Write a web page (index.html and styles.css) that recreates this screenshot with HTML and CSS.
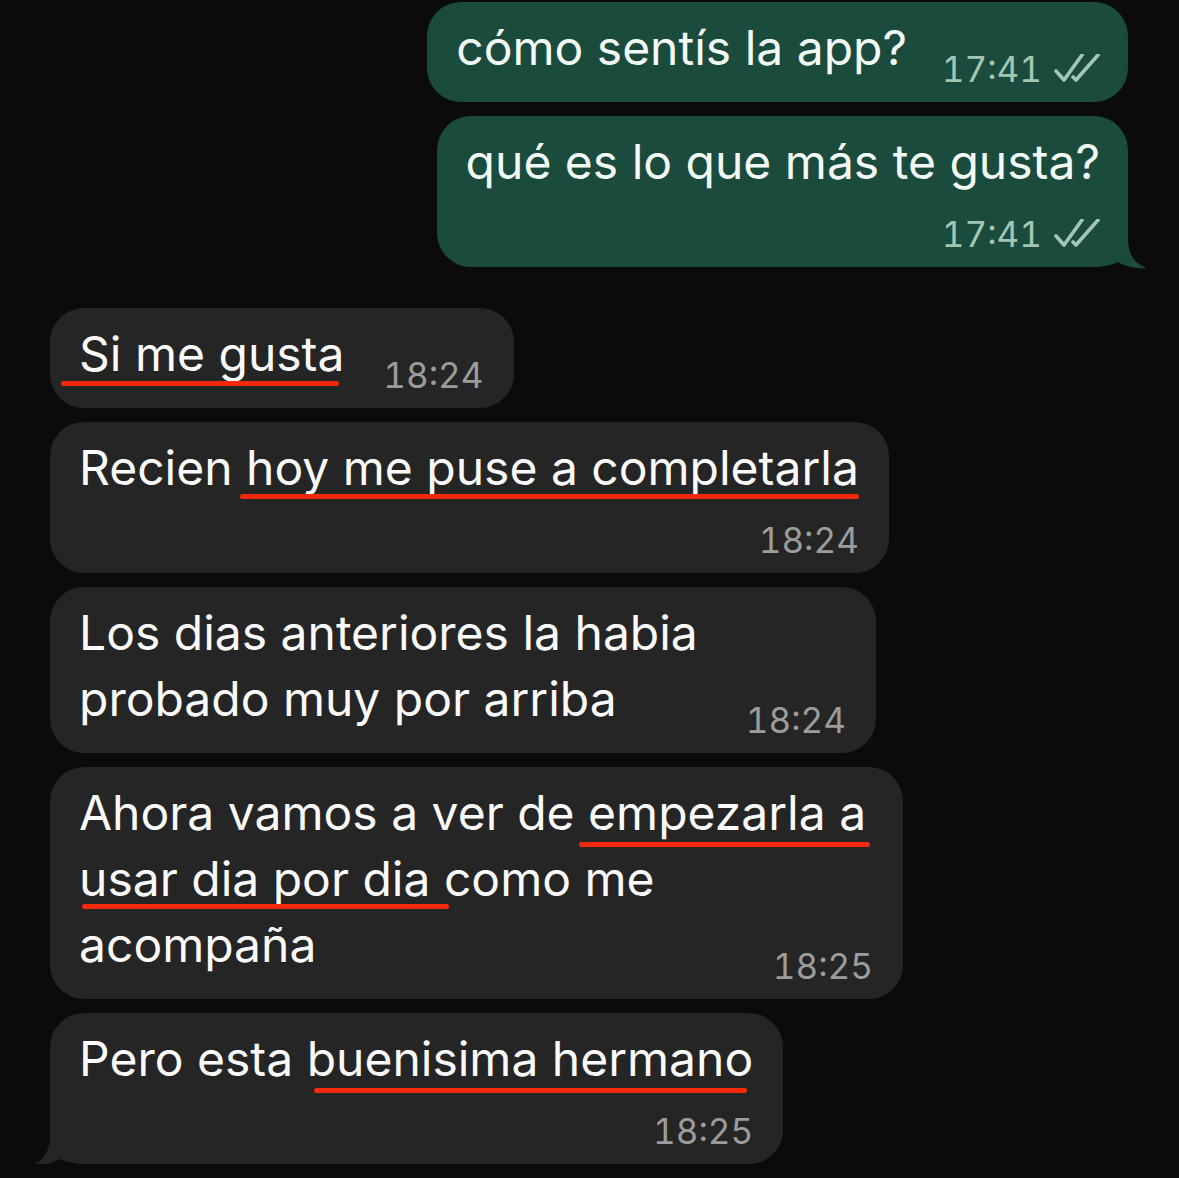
FILE: index.html
```html
<!DOCTYPE html>
<html lang="es">
<head>
<meta charset="utf-8">
<title>Chat</title>
<link rel="stylesheet" href="styles.css">
</head>
<body>
<main class="chat">
  <div class="bubble out">
    <p class="text">cómo sentís la app?<span class="spacer sp-out"></span></p>
    <span class="meta"><span class="time">17:41</span><svg class="ticks" viewBox="0 0 46 28" width="46" height="28"><path d="M2 17 L10 26 L28 1"/><path d="M19 23 L22 26 L44 1"/></svg></span>
  </div>
  <div class="bubble out tailed">
    <svg class="tail tail-out" viewBox="0 0 60 46" width="60" height="46"><path d="M0 0 H40 V14 C40 30 46 40 59 44 C50 45 38 43 30 38 C25 41 15 43 0 43 Z"/></svg>
    <p class="text">qué es lo que más te gusta?<span class="spacer row"></span></p>
    <span class="meta"><span class="time">17:41</span><svg class="ticks" viewBox="0 0 46 28" width="46" height="28"><path d="M2 17 L10 26 L28 1"/><path d="M19 23 L22 26 L44 1"/></svg></span>
  </div>

  <div class="bubble in first">
    <p class="text"><span class="ul u1">Si me gusta</span><span class="spacer sp-in"></span></p>
    <span class="meta"><span class="time">18:24</span></span>
  </div>
  <div class="bubble in">
    <p class="text">Recien <span class="ul u2">hoy me puse a completarla</span><span class="spacer row"></span></p>
    <span class="meta"><span class="time">18:24</span></span>
  </div>
  <div class="bubble in w5">
    <p class="text">Los dias anteriores la habia<br>probado muy por arriba<span class="spacer sp-in"></span></p>
    <span class="meta"><span class="time">18:24</span></span>
  </div>
  <div class="bubble in w6">
    <p class="text">Ahora vamos a ver de <span class="ul u3">empezarla a</span><br><span class="ul u4">usar dia por dia</span> como me<br>acompaña<span class="spacer sp-in"></span></p>
    <span class="meta"><span class="time">18:25</span></span>
  </div>
  <div class="bubble in tailed">
    <svg class="tail tail-in" viewBox="0 0 60 46" width="60" height="46"><path d="M0 0 H40 V14 C40 30 46 40 59 44 C50 45 38 43 30 38 C25 41 15 43 0 43 Z"/></svg>
    <p class="text">Pero esta <span class="ul u5">buenisima hermano</span><span class="spacer row"></span></p>
    <span class="meta"><span class="time">18:25</span></span>
  </div>
</main>
</body>
</html>
```
FILE: styles.css
```css
html, body {
  margin: 0;
  padding: 0;
  background: #0b0b0b;
}

.chat {
  display: flex;
  flex-direction: column;
  gap: 14px;
  padding: 2px 51px 0 50px;
  font-family: Inter, "Noto Sans", sans-serif;
}

.bubble {
  position: relative;
  display: grid;
  padding: 13px 30px 21px 29px;
  border-radius: 34px;
  box-sizing: border-box;
}

.bubble.out {
  align-self: flex-end;
  background: #1b4b3c;
  color: #f3faf6;
  padding-right: 28px;
}

.bubble.in {
  align-self: flex-start;
  background: #252525;
  color: #fafafa;
}

.bubble.first {
  margin-top: 27px;
}

.bubble.w5 { min-width: 826px; }
.bubble.w6 { min-width: 853px; }

.text,
.meta {
  grid-area: 1 / 1;
  position: relative;
  z-index: 1;
}

.text {
  margin: 0;
  font-size: 48px;
  line-height: 66px;
  white-space: nowrap;
}

.spacer {
  display: inline-block;
  height: 1px;
}
.spacer.sp-in { width: 139px; }
.spacer.sp-out { width: 193px; }
.spacer.row {
  display: block;
  height: 51px;
}

.meta {
  justify-self: end;
  align-self: end;
  font-size: 35px;
  line-height: 36px;
  font-variant-numeric: tabular-nums;
  white-space: nowrap;
  margin-bottom: -6px;
  display: flex;
  align-items: baseline;
  gap: 12px;
}

.out .meta { color: #a3c6b5; }
.in .meta { color: #9c9c9c; }

.ticks {
  fill: none;
  stroke: #a3c6b5;
  stroke-width: 3.6;
  stroke-linecap: round;
  stroke-linejoin: round;
  align-self: flex-end;
  margin-bottom: 5px;
}

.tail {
  position: absolute;
  bottom: -3px;
  z-index: 0;
}
.tail-out {
  right: -20px;
  fill: #1b4b3c;
}
.tail-in {
  left: -20px;
  fill: #252525;
  transform: scaleX(-1);
}

.ul {
  position: relative;
}
.ul::after {
  content: "";
  position: absolute;
  height: 5px;
  border-radius: 3px;
  background: #f42a0b;
  left: var(--l);
  right: var(--r);
  top: calc(46.5px + var(--dy) - 2.5px);
}
.u1 { --l: -18px; --r: 6px; --dy: 13px; }
.u2 { --l: -6px; --r: 0px; --dy: 12px; }
.u3 { --l: -9px; --r: -4px; --dy: 15px; }
.u4 { --l: 3px; --r: -19px; --dy: 11px; }
.u5 { --l: 7px; --r: 6px; --dy: 15px; }
```
